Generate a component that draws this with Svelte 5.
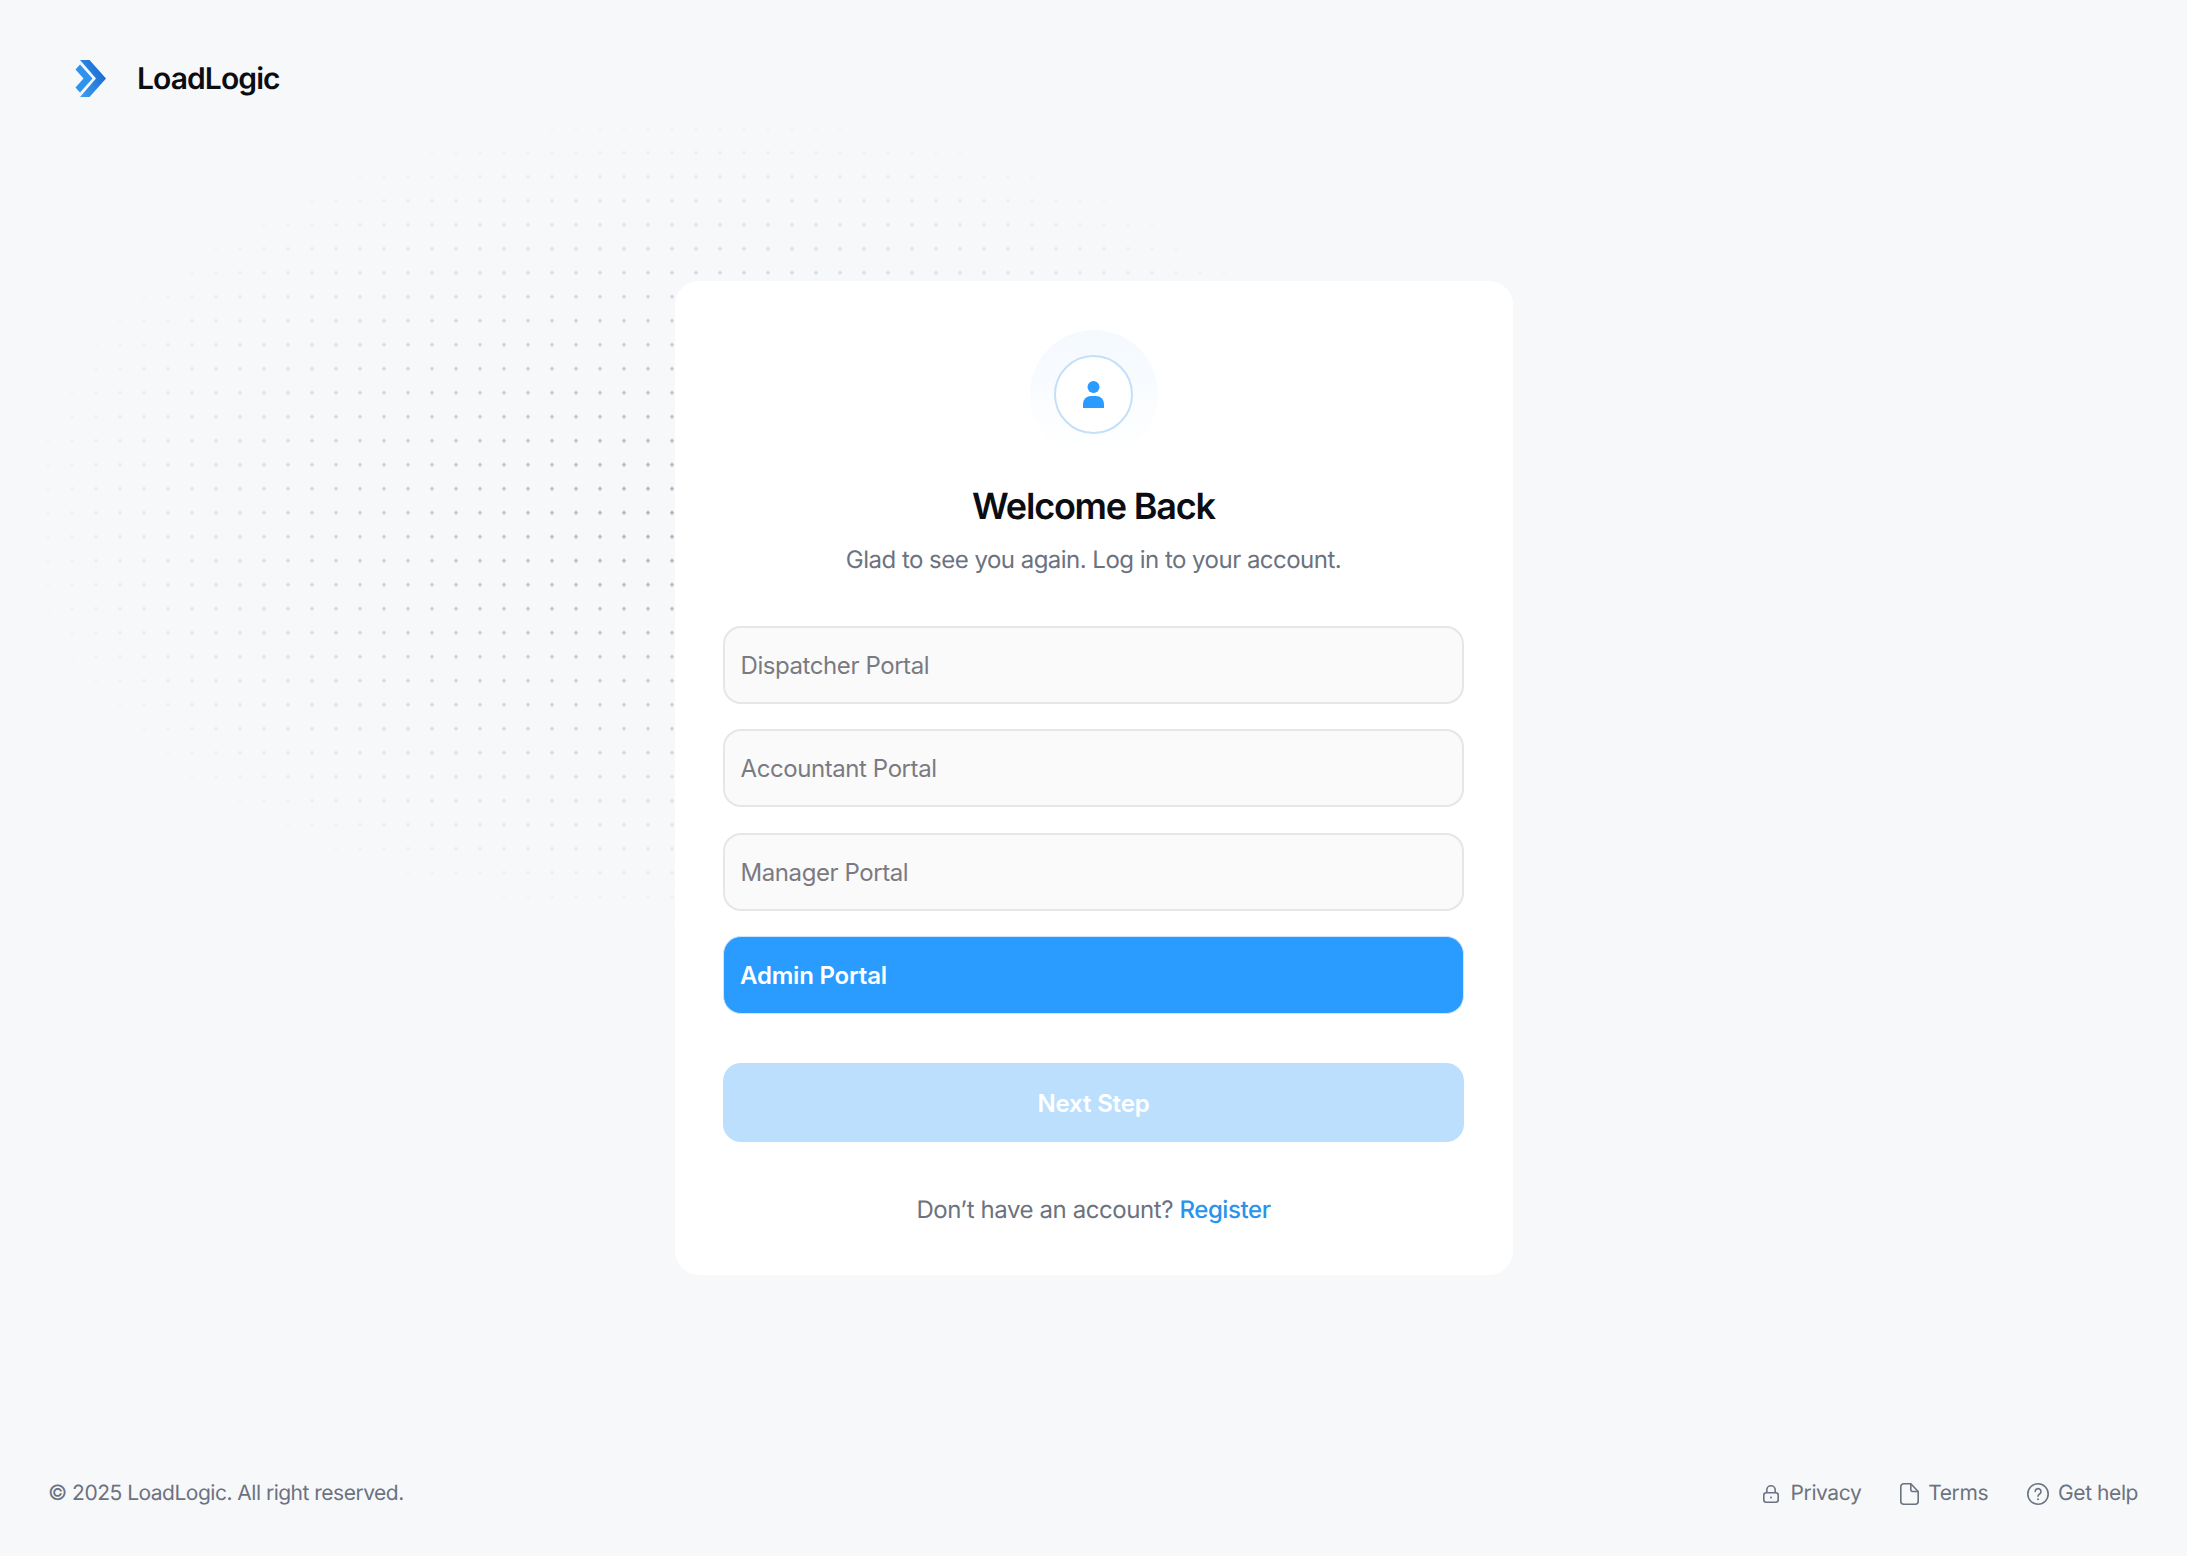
<script>
  const portals = ['Dispatcher Portal', 'Accountant Portal', 'Manager Portal'];
</script>

<div class="page">
  <div class="dots" aria-hidden="true"></div>

  <header class="brand">
    <svg class="logo" width="31" height="37" viewBox="0 0 31 37">
      <defs>
        <linearGradient id="g" x1="0" y1="1" x2="1" y2="0.300">
          <stop offset="0" stop-color="#3f9ff3" />
          <stop offset="1" stop-color="#1769cf" />
        </linearGradient>
      </defs>
      <path d="M5 0h9.500L31 18.500 14.500 37H5l16-18.500z" fill="url(#g)" />
      <path d="M0.500 9.500L5 4.500 17.500 18.500 5 32.500 0.500 27.500 8.500 18.500z" fill="#3192ee" />
    </svg>
    <span class="name">LoadLogic</span>
  </header>

  <main class="card">
    <div class="halo">
      <div class="avatar">
        <svg width="21" height="27" viewBox="0 0 21 27">
          <circle cx="10.500" cy="6" r="6" fill="#2a9bff" />
          <path d="M0 27v-4a8 8 0 0 1 8-8h5a8 8 0 0 1 8 8v4z" fill="#2a9bff" />
        </svg>
      </div>
    </div>
    <h1>Welcome Back</h1>
    <p class="sub">Glad to see you again. Log in to your account.</p>

    <div class="options">
      {#each portals as p}
        <button class="opt">{p}</button>
      {/each}
      <button class="opt active">Admin Portal</button>
    </div>

    <button class="next">Next Step</button>

    <p class="reg">Don’t have an account? <a href="#register">Register</a></p>
  </main>

  <footer class="foot">
    <span>© 2025 LoadLogic. All right reserved.</span>
    <nav>
      <a class="wide" href="#privacy">
        <svg width="16" height="18" viewBox="0 0 16 18" fill="none" stroke="currentColor" stroke-width="1.600">
          <rect x="0.800" y="7.800" width="14.400" height="9.400" rx="2.400" />
          <path d="M3.800 7.800V5a4.200 4.200 0 0 1 8.400 0v2.800" />
          <circle cx="8" cy="12.500" r="1" fill="currentColor" stroke="none" />
        </svg>
        Privacy
      </a>
      <a href="#terms">
        <svg width="19" height="22" viewBox="0 0 19 22" fill="none" stroke="currentColor" stroke-width="1.600" stroke-linejoin="round">
          <path d="M3.800 0.800h7l7.400 7.700v9.700a3 3 0 0 1-3 3H3.800a3 3 0 0 1-3-3V3.800a3 3 0 0 1 3-3z" />
          <path d="M10.800 0.800v5.700a2 2 0 0 0 2 2h5.400" />
        </svg>
        Terms
      </a>
      <a href="#help">
        <svg width="22" height="22" viewBox="0 0 22 22" fill="none" stroke="currentColor" stroke-width="1.600" stroke-linecap="round">
          <circle cx="11" cy="11" r="10.200" />
          <path d="M8.200 8.500a2.900 2.900 0 1 1 4.400 2.500c-1 .7-1.600 1.200-1.600 2.300" />
          <circle cx="11" cy="16.300" r="1" fill="currentColor" stroke="none" />
        </svg>
        Get help
      </a>
    </nav>
  </footer>
</div>

<style>
  :global(body) {
    margin: 0;
    background: #f7f8fa;
  }
  .page {
    position: relative;
    box-sizing: border-box;
    min-height: 1556px;
    display: grid;
    grid-template-rows: 1fr auto 1fr;
    justify-items: center;
    font-family: Inter, "Liberation Sans", sans-serif;
    text-rendering: geometricPrecision;
    overflow: hidden;
  }
  .dots {
    position: absolute;
    left: 0;
    top: 0;
    width: 1500px;
    height: 1000px;
    background-image: radial-gradient(circle, #adb0b7 1.5px, transparent 1.9px);
    background-size: 24px 24px;
    background-position: 12px -3.300px;
    -webkit-mask-image: radial-gradient(ellipse 695px 415px at 700px 518px, #000 0%, rgba(0,0,0,.6) 40%, transparent 100%);
    mask-image: radial-gradient(ellipse 695px 415px at 700px 518px, #000 0%, rgba(0,0,0,.6) 40%, transparent 100%);
  }
  .brand {
    position: relative;
    justify-self: start;
    align-self: start;
    display: flex;
    align-items: center;
    gap: 31px;
    padding: 60px 0 0 75px;
  }
  .logo { display: block; }
  .name {
    font-size: 30px;
    font-weight: 600;
    letter-spacing: -0.9px;
    color: #0b0d12;
  }
  .card {
    position: relative;
    box-sizing: border-box;
    width: 838px;
    height: 994px;
    background: #fff;
    border-radius: 24px;
    padding: 49px 48.500px 0;
    display: flex;
    flex-direction: column;
    align-items: stretch;
    text-align: center;
  }
  .halo {
    align-self: center;
    width: 128px;
    height: 128px;
    border-radius: 50%;
    background: linear-gradient(#f4f9fe, #ffffff);
    display: flex;
    align-items: center;
    justify-content: center;
  }
  .avatar {
    width: 79px;
    height: 79px;
    box-sizing: border-box;
    border: 2px solid #c4e0f8;
    border-radius: 50%;
    background: #fff;
    display: flex;
    align-items: center;
    justify-content: center;
  }
  h1 {
    margin: 26px 0 0;
    font-size: 36px;
    line-height: 44px;
    font-weight: 600;
    letter-spacing: -1.2px;
    color: #0b0d12;
  }
  .sub {
    margin: 14px 0 0;
    font-size: 24px;
    line-height: 36px;
    letter-spacing: -0.52px;
    color: #6b7280;
  }
  .options {
    margin-top: 47.500px;
    display: flex;
    flex-direction: column;
    gap: 25.500px;
  }
  button {
    font-family: inherit;
    cursor: pointer;
  }
  .opt {
    height: 78px;
    box-sizing: border-box;
    padding: 1px 15.500px 0;
    background: #fafafa;
    border: 2px solid #e6e6ea;
    border-radius: 18px;
    text-align: left;
    font-size: 24px;
    letter-spacing: -0.42px;
    color: #7a7a82;
  }
  .opt.active {
    background: #2a9bff;
    border: 1.500px solid #cfe5f9;
    padding-left: 16px;
    letter-spacing: -0.2px;
    color: #fff;
    font-weight: 600;
  }
  .next {
    margin-top: 49px;
    height: 78.500px;
    padding-top: 3px;
    border: 0;
    border-radius: 18px;
    background: #bcdffd;
    color: #fff;
    font-size: 24px;
    font-weight: 600;
    letter-spacing: -0.15px;
  }
  .reg {
    margin: 50.500px 0 0;
    font-size: 24px;
    line-height: 36px;
    letter-spacing: -0.42px;
    color: #6b7280;
  }
  .reg a {
    color: #2a93ee;
    font-weight: 500;
    text-decoration: none;
  }
  .foot {
    position: relative;
    grid-row: 3;
    justify-self: stretch;
    align-self: end;
    display: flex;
    justify-content: space-between;
    align-items: center;
    padding: 0 49px 48px 48px;
    font-size: 21px;
    line-height: 28px;
    letter-spacing: -0.5px;
    color: #6b7280;
  }
  .foot nav {
    display: flex;
    gap: 39px;
    letter-spacing: -0.42px;
  }
  .foot a {
    display: flex;
    align-items: center;
    gap: 9px;
    color: #6b7280;
    text-decoration: none;
  }
  .foot a.wide {
    gap: 12px;
  }
</style>
